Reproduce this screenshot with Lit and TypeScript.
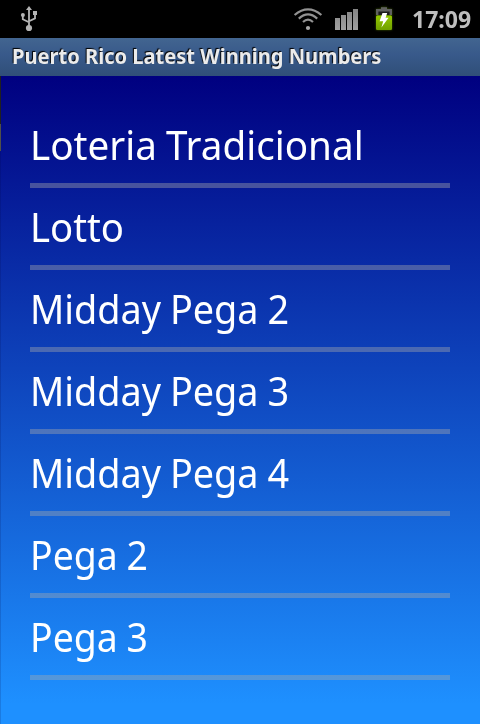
import { LitElement, html, css } from "lit";
import { customElement } from "lit/decorators.js";
import { styleMap } from "lit/directives/style-map.js";

/** Menu entries with the horizontal condensing applied to each label. */
const GAMES = [
  { name: "Loteria Tradicional", fit: 0.966 },
  { name: "Lotto", fit: 0.957 },
  { name: "Midday Pega 2", fit: 0.945 },
  { name: "Midday Pega 3", fit: 0.945 },
  { name: "Midday Pega 4", fit: 0.945 },
  { name: "Pega 2", fit: 0.935 },
  { name: "Pega 3", fit: 0.935 },
];

@customElement("status-bar")
class StatusBar extends LitElement {
  static styles = css`
    :host { display: flex; align-items: center; height: 38px; background: #000; padding: 0 9px 0 20px; box-sizing: border-box; }
    svg { display: block; flex: none; }
    .usb { margin-right: auto; }
    .signal { margin-left: 10px; }
    .battery { margin-left: 15px; filter: drop-shadow(0 0 1px rgba(120, 180, 0, 0.5)); }
    .clock { width: 59px; margin-left: 18px; font: bold 24px/38px "Noto Sans", sans-serif; color: #bebebe; display: flex; }
    .clock span { transform: scaleX(0.96); transform-origin: left; white-space: nowrap; }
  `;
  render() {
    return html`
      <svg class="usb" width="18" height="38" viewBox="0 0 18 38" fill="none" stroke="#b4b4b4" stroke-width="1.8">
        <path d="M9 9V27M2.8 15V19.2L9 22.3M15 14V18.4L9 21.2" />
        <path d="M9 6L12 10H6Z" fill="#b4b4b4" stroke="none" />
        <circle cx="2.9" cy="15" r="2" fill="#b4b4b4" stroke="none" />
        <path d="M13 11h4v4h-4z" fill="#b4b4b4" stroke="none" />
        <circle cx="9" cy="28" r="3.1" fill="#b4b4b4" stroke="none" />
      </svg>
      <svg class="wifi" width="30" height="38" viewBox="0 0 30 38" fill="none" stroke="#929292" stroke-width="2.2">
        <path d="M1.6 15Q15 3.7 28.4 15M5.8 18.6Q15 10.3 24.2 18.6M10 22Q15 17.3 20 22" />
        <circle cx="15" cy="28" r="2.1" fill="#aaa" stroke="none" />
      </svg>
      <svg class="signal" width="26" height="38" viewBox="0 0 26 38">
        <defs><linearGradient id="s" x2="0" y2="1"><stop stop-color="#858585" /><stop offset="1" stop-color="#a0a0a0" /></linearGradient></defs>
        <path fill="url(#s)" d="M2 18h5v12H2zM8 15h5v15H8zM14 12h5v18h-5zM20 9h5v21h-5z" />
      </svg>
      <svg class="battery" width="20" height="38" viewBox="0 0 20 38">
        <defs><linearGradient id="b" x2="0" y2="1"><stop stop-color="#94c900" /><stop offset="1" stop-color="#70a000" /></linearGradient></defs>
        <path d="M3.2 15V10.2H16.8V15" fill="#1c1c1c" stroke="#606060" stroke-width="2.4" />
        <path d="M7 7.2H13V9.4H7Z" fill="#606060" />
        <rect x="2" y="15.5" width="16" height="14.5" rx="1.2" fill="url(#b)" />
        <path d="M8.5 13H13.2L11.6 17.8H14.6L7.4 27.4L9.2 21.2H5.6Z" fill="#fff" />
      </svg>
      <div class="clock"><span>17:09</span></div>`;
  }
}

@customElement("app-root")
class AppRoot extends LitElement {
  static styles = css`
    :host { display: flex; flex-direction: column; height: 724px; overflow: hidden; font-family: "Noto Sans", sans-serif; }
    .title { height: 38px; flex: none; box-sizing: border-box; padding-left: 12px; background: linear-gradient(#426590, #38598a 45%, #304f78); color: #ebebeb; font-weight: bold; font-size: 21px; line-height: 37px; text-shadow: -1px -1px 1px #000; }
    .title span, .row span { display: inline-block; white-space: nowrap; transform-origin: left; }
    .title span { transform: scaleX(0.956); }
    .body { flex: 1; display: flex; background: linear-gradient(#000080, #1e90ff 97%); }
    .edge { width: 1px; background: linear-gradient(#202020 0 48px, #505048 48px 75px, rgba(0, 0, 60, 0.15) 75px); }
    .list { flex: 1; padding: 30px 30px 0 29px; }
    .row { height: 82px; box-sizing: border-box; border-bottom: 5px solid rgba(170, 170, 170, 0.4); color: #fff; font-size: 40px; line-height: 78px; word-spacing: -1px; }
  `;
  render() {
    return html`
      <status-bar></status-bar>
      <div class="title"><span>Puerto Rico Latest Winning Numbers</span></div>
      <div class="body">
        <div class="edge"></div>
        <div class="list">
          ${GAMES.map((g) => html`<div class="row"><span style=${styleMap({ transform: `scaleX(${g.fit})` })}>${g.name}</span></div>`)}
        </div>
      </div>`;
  }
}
